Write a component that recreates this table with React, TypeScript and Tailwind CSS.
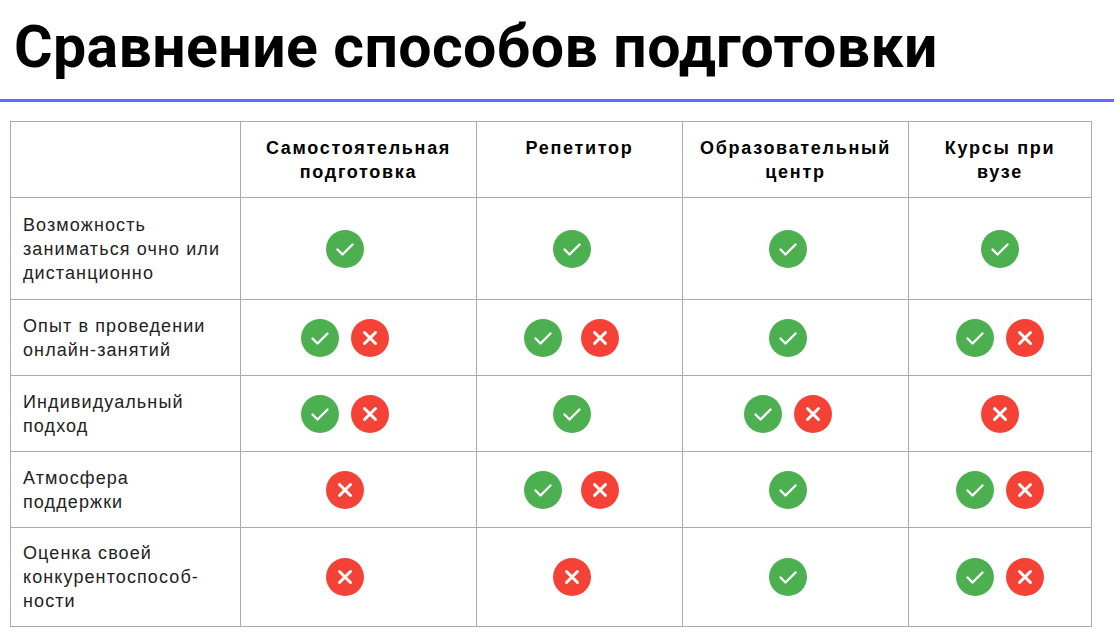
type Mark = 'y' | 'n';

const columns = ['Самостоятельная подготовка', 'Репетитор', 'Образовательный центр', 'Курсы при вузе'];

const rows: { label: string; cells: Mark[][] }[] = [
  { label: 'Возможность заниматься очно или дистанционно', cells: [['y'], ['y'], ['y'], ['y']] },
  { label: 'Опыт в проведении онлайн-занятий', cells: [['y', 'n'], ['y', 'n'], ['y'], ['y', 'n']] },
  { label: 'Индивидуальный подход', cells: [['y', 'n'], ['y'], ['y', 'n'], ['n']] },
  { label: 'Атмосфера поддержки', cells: [['n'], ['y', 'n'], ['y'], ['y', 'n']] },
  { label: 'Оценка своей конкурентоспособ-ности', cells: [['n'], ['n'], ['y'], ['y', 'n']] },
];

// per-column nudges so the icons sit where the slide has them
const cellShift = ['pr-7 gap-3', 'pr-4 gap-[19px]', 'pr-4 gap-3', 'pr-0 gap-3'];

function Yes() {
  return (
    <svg width="38" height="38" viewBox="0 0 38 38">
      <circle cx="19" cy="19" r="19" fill="#4caf50" />
      <path d="M11.5 19.5l5 5 10-10" fill="none" stroke="#fff" strokeWidth="2.4" strokeLinecap="round" strokeLinejoin="round" />
    </svg>
  );
}

function No() {
  return (
    <svg width="38" height="38" viewBox="0 0 38 38">
      <circle cx="19" cy="19" r="19" fill="#f44336" />
      <path d="M13.5 13.5l11 11M24.5 13.5l-11 11" fill="none" stroke="#fff" strokeWidth="3" strokeLinecap="round" />
    </svg>
  );
}

export default function App() {
  return (
    <div className="w-[1114px] h-[639px] bg-white overflow-hidden">
      <div className="h-[99px] flex items-center pl-[14px] pb-[6px]">
        <h1 className="text-[59px] font-bold text-black tracking-[0.4px] leading-none" style={{ fontFamily: 'Roboto, Inter, sans-serif' }}>
          Сравнение способов подготовки
        </h1>
      </div>
      <div className="h-[3px] bg-[#5c6df9]" />

      <div
        className="mt-[19px] ml-[10px] w-[1082px] grid grid-cols-[230px_236px_206px_226px_183px] border-l border-t border-[#ababab] text-[18px] leading-[24px]"
        style={{ fontFamily: '"Liberation Sans", Arial, sans-serif' }}
      >
        <div className="border-r border-b border-[#ababab] h-[76px]" />
        {columns.map((c) => (
          <div key={c} className="border-r border-b border-[#ababab] h-[76px] px-4 pt-[14px] text-center font-bold text-black tracking-[1.7px]">
            {c}
          </div>
        ))}

        {rows.map((r, i) => {
          const h = i === 0 ? 'h-[102px]' : i === 4 ? 'h-[99px]' : 'h-[76px]';
          return [
            <div key={r.label} className={`border-r border-b border-[#ababab] ${h} px-3 flex items-center text-[#222] tracking-[1.1px]`}>
              {r.label}
            </div>,
            ...r.cells.map((marks, j) => (
              <div key={r.label + j} className={`border-r border-b border-[#ababab] ${h} flex items-center justify-center ${cellShift[j]}`}>
                {marks.map((m, k) => (m === 'y' ? <Yes key={k} /> : <No key={k} />))}
              </div>
            )),
          ];
        })}
      </div>
    </div>
  );
}
